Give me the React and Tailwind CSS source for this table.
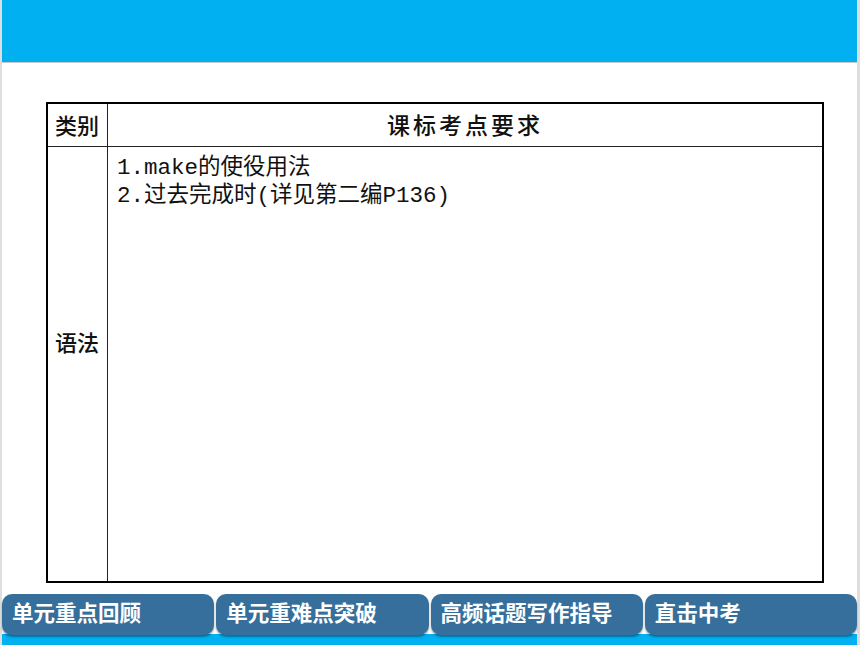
import React from 'react';

const cjk = { fontFamily: '"Liberation Sans", "Noto Sans CJK SC", sans-serif' };
const mono = { fontFamily: '"Liberation Mono", "Noto Sans CJK SC", monospace' };

const tabs = ['单元重点回顾', '单元重难点突破', '高频话题写作指导', '直击中考'];

const App = () => {
  return (
    <div className="w-[860px] h-[645px] flex bg-[#dedede] pl-[2px] pr-[3px] overflow-hidden" style={cjk}>
      <div className="flex-1 flex flex-col bg-white">
        {/* top bar */}
        <div className="h-[63px] bg-[#00b0f0] border-b border-[#c8c8c8]" />

        {/* table */}
        <div className="flex-1 pt-[39px] pl-[44px] pr-[33px]">
          <div className="h-[481px] border-2 border-black flex flex-col">
            <div className="h-[43px] flex border-b border-[#222]">
              <div className="w-[60px] border-r border-[#222] flex items-center pl-[7px] pt-[3px] text-[22px] font-medium text-[#111]">
                类别
              </div>
              <div className="flex-1 flex items-center justify-center pt-[3px] text-[23px] tracking-[3px] font-medium text-[#111]">
                课标考点要求
              </div>
            </div>
            <div className="flex-1 flex">
              <div className="w-[60px] border-r border-[#222] pl-[7px] pt-[180px] text-[22px] font-medium text-[#111]">
                语法
              </div>
              <div className="flex-1 pl-[9px] pt-[7px] text-[22.5px] leading-[28px] text-[#111]" style={mono}>
                <div>1.make的使役用法</div>
                <div>2.过去完成时(详见第二编P136)</div>
              </div>
            </div>
          </div>
        </div>

        {/* bottom nav */}
        <div className="flex flex-col">
          <div className="grid grid-cols-4 gap-[2px] h-[41px] relative z-10">
            {tabs.map((t, i) => (
              <div
                key={i}
                className="bg-[#366f9b] rounded-[10px] shadow-[0_2px_2px_rgba(0,0,0,0.35)] flex items-center pl-[10px] text-white text-[21.5px] font-bold"
              >
                {t}
              </div>
            ))}
          </div>
          <div className="h-[11px] bg-[#00b0f0] -mt-[1px]" />
        </div>
      </div>
    </div>
  );
};

export default App;
